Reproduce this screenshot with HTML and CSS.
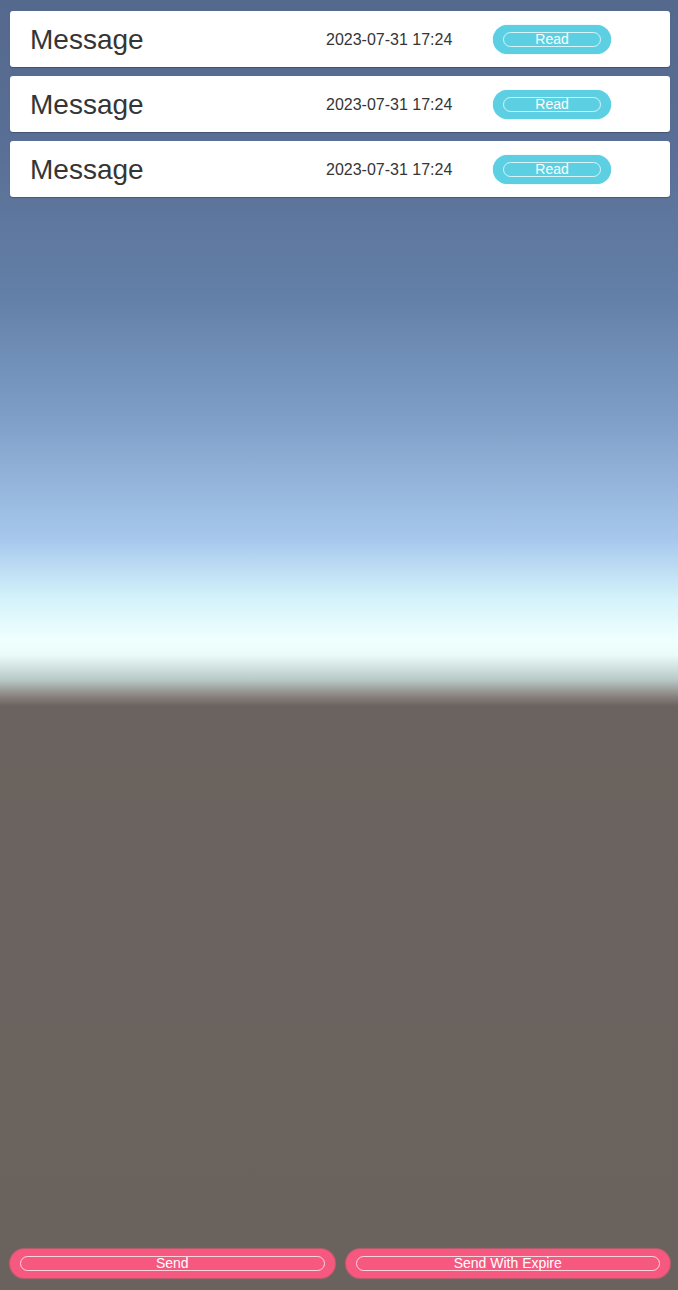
FILE: index.html
```html
<!DOCTYPE html>
<html lang="en">
<head>
  <meta charset="UTF-8">
  <meta name="viewport" content="width=device-width, initial-scale=1">
  <title>Messages</title>
  <link rel="stylesheet" href="styles.css">
</head>
<body>
  <div class="screen">
    <div class="message-list">
      <div class="message-row">
        <span class="title">Message</span>
        <span class="date">2023-07-31 17:24</span>
        <button class="pill pill-read"><span>Read</span></button>
      </div>
      <div class="message-row">
        <span class="title">Message</span>
        <span class="date">2023-07-31 17:24</span>
        <button class="pill pill-read"><span>Read</span></button>
      </div>
      <div class="message-row">
        <span class="title">Message</span>
        <span class="date">2023-07-31 17:24</span>
        <button class="pill pill-read"><span>Read</span></button>
      </div>
    </div>

    <div class="actions">
      <button class="pill pill-send"><span>Send</span></button>
      <button class="pill pill-send"><span>Send With Expire</span></button>
    </div>
  </div>
</body>
</html>
```

FILE: styles.css
```css
* {
  margin: 0;
  padding: 0;
  box-sizing: border-box;
}
body {
  font-family: "Liberation Sans", Arial, sans-serif;
  width: 678px;
  height: 1290px;
  overflow: hidden;
}
/* skybox: sky fading into a bright horizon, then flat ground */
.screen {
  height: 1290px;
  display: flex;
  flex-direction: column;
  justify-content: space-between;
  padding: 11px 8px 12px 10px;
  background: linear-gradient(to bottom,
    #55698e 0px,
    #5a6f95 150px,
    #6380a8 300px,
    #7f9fc8 420px,
    #a7c8ec 540px,
    #d5f3fb 600px,
    #effffe 640px,
    #eafcfa 655px,
    #b8c8c6 680px,
    #837c78 698px,
    #6b635f 706px,
    #6a625d 1290px);
}
.message-list {
  display: flex;
  flex-direction: column;
  gap: 9px;
}
.message-row {
  height: 56px;
  background: #fff;
  border-radius: 3px;
  box-shadow: 0 1px 1px rgba(0, 0, 0, 0.25);
  display: flex;
  align-items: center;
  padding-left: 20px;
}
.title {
  font-size: 28px;
  color: #353535;
  width: 296px;
  padding-top: 2px;
}
.date {
  font-size: 16px;
  color: #353535;
  width: 167px;
  padding-top: 2px;
}
.pill {
  border: none;
  border-radius: 15px;
  height: 29px;
  display: flex;
  align-items: center;
  justify-content: center;
  font-family: inherit;
  color: #fff;
  font-size: 14px;
  cursor: pointer;
}
.pill span {
  display: block;
  flex: 1;
  height: 15px;
  line-height: 13px;
  border: 1px solid rgba(255, 255, 255, 0.75);
  border-radius: 8px;
  text-align: center;
}
.pill-read {
  width: 118px;
  background: #5ccfe2;
  padding: 0 10px 0 10px;
  box-shadow: 0 0 1px #5ccfe2;
}
.actions {
  display: flex;
  gap: 11px;
}
.pill-send {
  flex: 1;
  background: #f6587f;
  padding: 0 10px;
  box-shadow: 0 0 1px 1px rgba(246, 88, 127, 0.6);
}
```
